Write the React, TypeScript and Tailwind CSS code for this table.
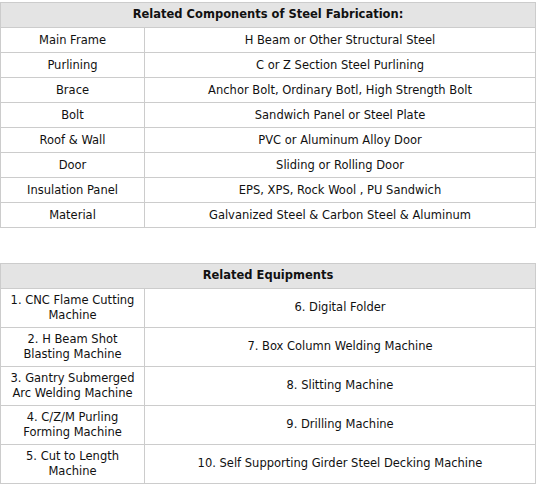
import React from 'react';

const components: [string, string][] = [
  ['Main Frame', 'H Beam or Other Structural Steel'],
  ['Purlining', 'C or Z Section Steel Purlining'],
  ['Brace', 'Anchor Bolt, Ordinary Botl, High Strength Bolt'],
  ['Bolt', 'Sandwich Panel or Steel Plate'],
  ['Roof & Wall', 'PVC or Aluminum Alloy Door'],
  ['Door', 'Sliding or Rolling Door'],
  ['Insulation Panel', 'EPS, XPS, Rock Wool , PU Sandwich'],
  ['Material', 'Galvanized Steel & Carbon Steel & Aluminum'],
];

const equipments: [string, string][] = [
  ['1. CNC Flame Cutting Machine', '6. Digital Folder'],
  ['2. H Beam Shot Blasting Machine', '7. Box Column Welding Machine'],
  ['3. Gantry Submerged Arc Welding Machine', '8. Slitting Machine'],
  ['4. C/Z/M Purling Forming Machine', '9. Drilling Machine'],
  ['5. Cut to Length Machine', '10. Self Supporting Girder Steel Decking Machine'],
];

const App: React.FC = () => {
  return (
    <div className="bg-white w-[537px] h-[484px] pt-[2px] text-[#111] text-[11.5px] font-['DejaVu_Sans',Verdana,sans-serif]">
      <table className="w-[536px] border-collapse table-fixed">
        <colgroup>
          <col className="w-[144px]" />
          <col />
        </colgroup>
        <thead>
          <tr className="h-[25px]">
            <th colSpan={2} className="border border-[#cccccc] bg-[#e4e4e4] font-bold text-center">
              Related Components of Steel Fabrication:
            </th>
          </tr>
        </thead>
        <tbody>
          {components.map(([name, value]) => (
            <tr key={name} className="h-[25px]">
              <td className="border border-[#cccccc] text-center pt-[2px]">{name}</td>
              <td className="border border-[#cccccc] text-center pt-[2px]">{value}</td>
            </tr>
          ))}
        </tbody>
      </table>

      <table className="mt-[35px] w-[536px] border-collapse table-fixed">
        <colgroup>
          <col className="w-[144px]" />
          <col />
        </colgroup>
        <thead>
          <tr className="h-[25px]">
            <th colSpan={2} className="border border-[#cccccc] bg-[#e4e4e4] font-bold text-center">
              Related Equipments
            </th>
          </tr>
        </thead>
        <tbody>
          {equipments.map(([left, right]) => (
            <tr key={left} className="h-[39px]">
              <td className="border border-[#cccccc] text-center leading-[15px] px-[5px]">{left}</td>
              <td className="border border-[#cccccc] text-center">{right}</td>
            </tr>
          ))}
        </tbody>
      </table>
    </div>
  );
};

export default App;
